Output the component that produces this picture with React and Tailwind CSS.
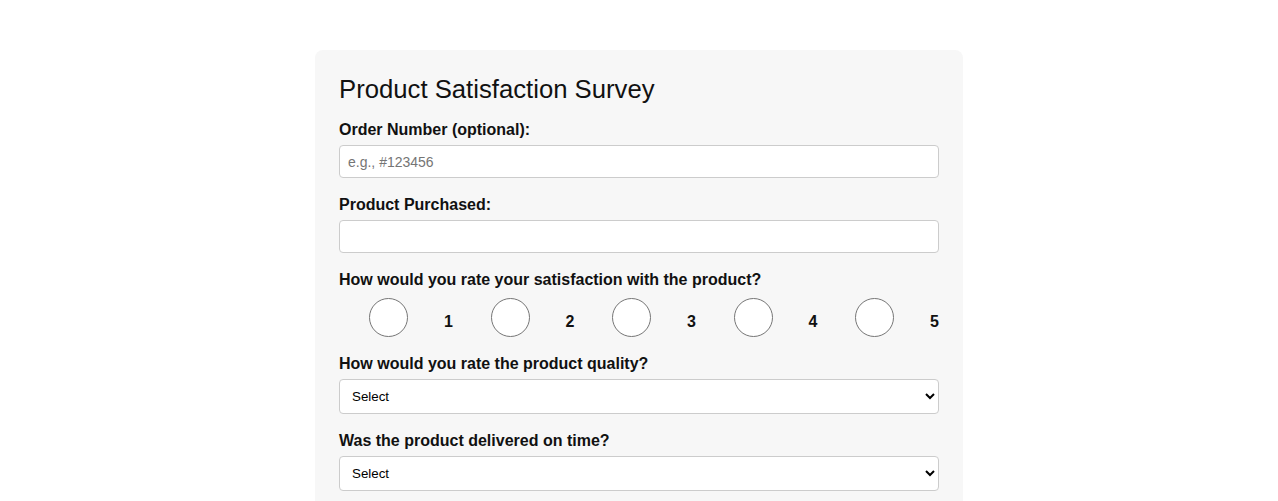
import React from 'react';

const font = { fontFamily: '"Liberation Sans", Arial, sans-serif' };

function Label({ children, className = '' }) {
  return (
    <label className={`block text-[16px] leading-[18px] pt-[1px] font-bold text-[#111] ${className}`}>
      {children}
    </label>
  );
}

function SelectBox() {
  return (
    <select className="block w-full h-[35px] px-[8px] text-[13.33px] text-black bg-white border border-[#ccc] rounded-[4px] mb-[17px]">
      <option>Select</option>
      <option>Excellent</option>
      <option>Good</option>
      <option>Average</option>
      <option>Poor</option>
    </select>
  );
}

export default function App() {
  return (
    <div className="min-h-screen bg-white pt-[50px]" style={font}>
      <div className="w-[648px] mx-auto bg-[#f7f7f7] rounded-[8px] p-[24px]">
        <h2 className="text-[25.7px] leading-[30px] font-normal text-[#111] mb-[16px]">
          Product Satisfaction Survey
        </h2>

        <Label className="mb-[6px]">Order Number (optional):</Label>
        <input
          type="text"
          placeholder="e.g., #123456"
          className="block w-full h-[33px] px-[8px] text-[14px] bg-white border border-[#ccc] rounded-[4px] mb-[17px] placeholder:text-[#757575]"
        />

        <Label className="mb-[6px]">Product Purchased:</Label>
        <input
          type="text"
          className="block w-full h-[33px] px-[8px] text-[14px] bg-white border border-[#ccc] rounded-[4px] mb-[17px]"
        />

        <Label className="mb-[9px]">How would you rate your satisfaction with the product?</Label>
        <div className="flex justify-between mb-[17px]">
          {[1, 2, 3, 4, 5].map((n) => (
            <label key={n} className="flex items-center w-[114px]">
              <input
                type="radio"
                name="satisfaction"
                className="appearance-none ml-[30px] w-[39px] h-[39px] rounded-full border border-[#767676] bg-white"
              />
              <span className="ml-[36px] mt-[8px] text-[16px] font-bold text-[#111]">{n}</span>
            </label>
          ))}
        </div>

        <Label className="mb-[6px]">How would you rate the product quality?</Label>
        <SelectBox />

        <Label className="mb-[6px]">Was the product delivered on time?</Label>
        <SelectBox />
      </div>
    </div>
  );
}
